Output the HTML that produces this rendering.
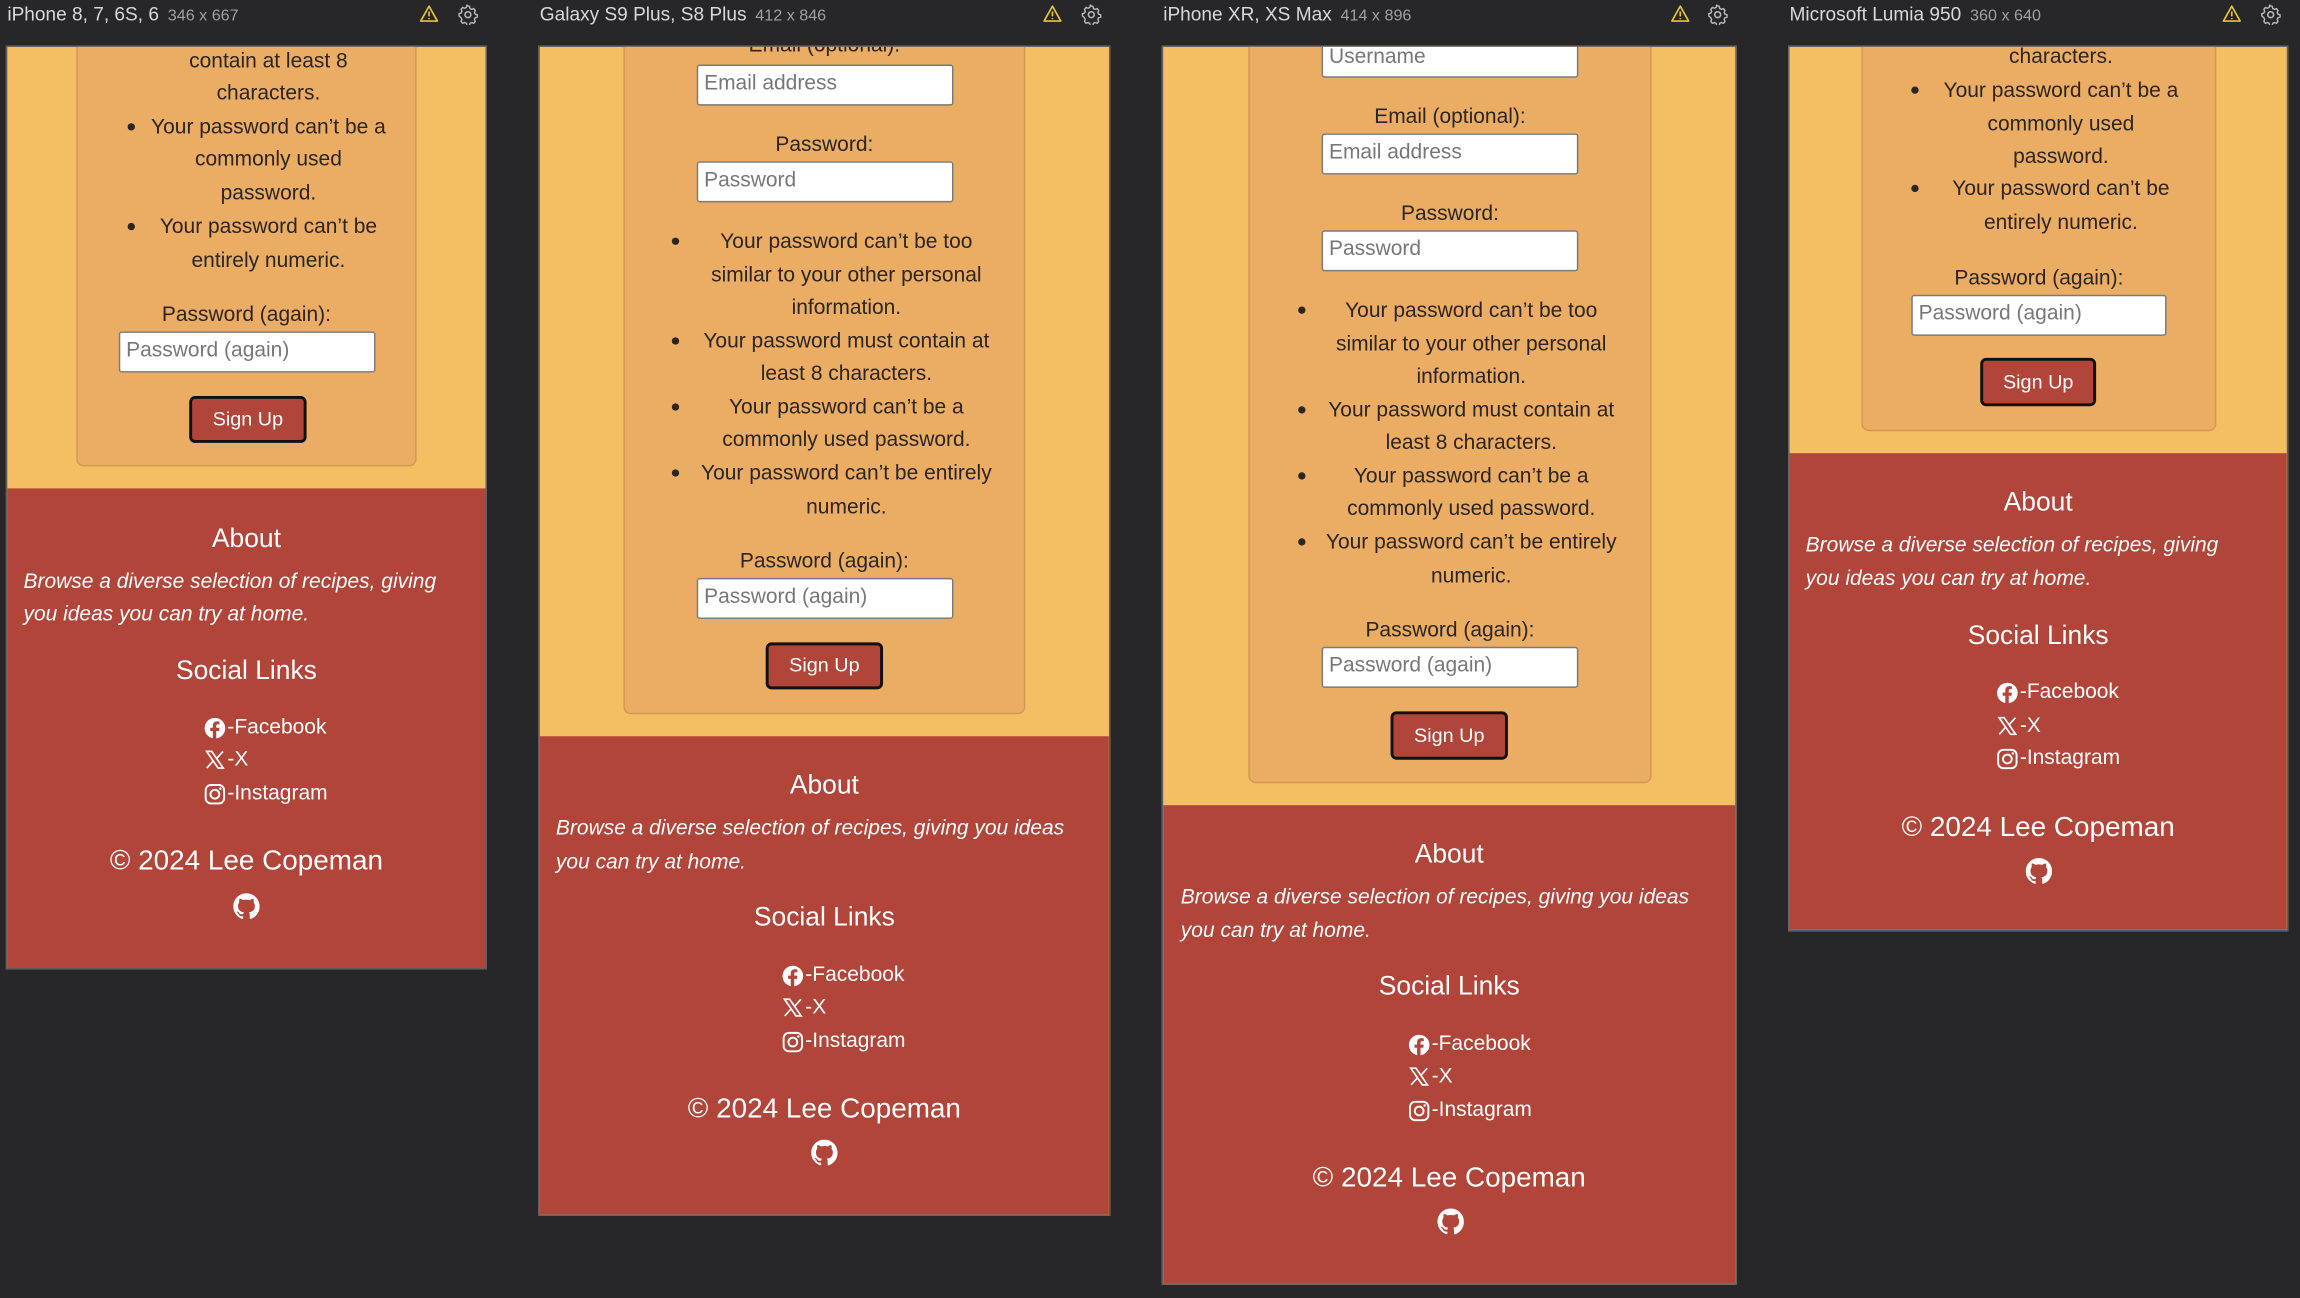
<!DOCTYPE html>
<html><head><meta charset="utf-8"><style>
html,body{margin:0;padding:0;background:#27272a;overflow:hidden;width:2300px;height:1298px}
#w{position:absolute;left:0;top:0;width:1568px;height:885px;transform:scale(1.46684,1.46667);transform-origin:0 0;font-family:"Liberation Sans",sans-serif}
.a{position:absolute}
.hd{position:absolute;top:2px;font-size:13px;color:#d8d8d8;white-space:nowrap}
.hd span{font-size:11px;color:#a0a0a0;margin-left:6px}
.pn{position:absolute;background:#F3BF62;border:1px solid #5e5e5e;overflow:hidden;box-sizing:border-box}
.card{position:absolute;background:#EBAC64;border:1px solid #D39857;border-radius:5px;box-sizing:border-box}
.ft{position:absolute;left:0;right:0;bottom:0;background:#B1453A}
.t{position:absolute;text-align:center;height:20px;line-height:20px;font-size:14.3px;color:#2b2622;white-space:nowrap}
.b{position:absolute;width:5px;height:5px;border-radius:50%;background:#2b2622}
.in{position:absolute;background:#fff;border:1px solid #7a7a7a;border-radius:2px;box-sizing:border-box;font-size:14.3px;color:#777;padding-left:4px;line-height:25px;white-space:nowrap;overflow:hidden}
.bt{position:absolute;background:#B1453A;border:2px solid #111;border-radius:4px;box-sizing:border-box;color:#fff;font-size:13.5px;text-align:center}
.w{position:absolute;color:#fff;white-space:nowrap;line-height:22px;height:22px}
.h{font-size:18px;text-align:center}
.it{font-style:italic;font-size:14.3px}
.sl{font-size:14.3px;display:flex;align-items:center}
.sl svg{margin-right:1px}
.cp{font-size:19px;text-align:center}
</style></head><body><div id="w">

<!-- headers -->
<div class="hd" style="left:5px">iPhone 8, 7, 6S, 6<span>346 x 667</span></div>
<div class="hd" style="left:368px">Galaxy S9 Plus, S8 Plus<span>412 x 846</span></div>
<div class="hd" style="left:793px">iPhone XR, XS Max<span>414 x 896</span></div>
<div class="hd" style="left:1220px">Microsoft Lumia 950<span>360 x 640</span></div>

<!-- header icons -->
<svg class="a" style="left:286px;top:3px" width="13" height="13" viewBox="0 0 16 16"><path d="M8 1.5L15 14H1Z" fill="none" stroke="#e8c23a" stroke-width="1.4" stroke-linejoin="round"/><path d="M8 6v4M8 11.5v1" stroke="#e8c23a" stroke-width="1.4"/></svg>
<svg class="a" style="left:312px;top:3px" width="14" height="14" viewBox="0 0 16 16"><circle cx="8" cy="8" r="2.3" fill="none" stroke="#bbb" stroke-width="1.2"/><path d="M8 1.2l1.2.3.4 1.7 1.3.7 1.6-.6 1.2 1.4-.6 1.6.6 1.3 1.6.5v1.8l-1.6.5-.6 1.3.6 1.6-1.2 1.4-1.6-.6-1.3.7-.4 1.7H7.2l-.4-1.7-1.3-.7-1.6.6-1.2-1.4.6-1.6-.6-1.3L1.1 9V7.2l1.6-.5.6-1.3-.6-1.6L3.9 2.4l1.6.6 1.3-.7.4-1.7Z" fill="none" stroke="#bbb" stroke-width="1.1"/></svg>
<svg class="a" style="left:711px;top:3px" width="13" height="13" viewBox="0 0 16 16"><path d="M8 1.5L15 14H1Z" fill="none" stroke="#e8c23a" stroke-width="1.4" stroke-linejoin="round"/><path d="M8 6v4M8 11.5v1" stroke="#e8c23a" stroke-width="1.4"/></svg>
<svg class="a" style="left:737px;top:3px" width="14" height="14" viewBox="0 0 16 16"><circle cx="8" cy="8" r="2.3" fill="none" stroke="#bbb" stroke-width="1.2"/><path d="M8 1.2l1.2.3.4 1.7 1.3.7 1.6-.6 1.2 1.4-.6 1.6.6 1.3 1.6.5v1.8l-1.6.5-.6 1.3.6 1.6-1.2 1.4-1.6-.6-1.3.7-.4 1.7H7.2l-.4-1.7-1.3-.7-1.6.6-1.2-1.4.6-1.6-.6-1.3L1.1 9V7.2l1.6-.5.6-1.3-.6-1.6L3.9 2.4l1.6.6 1.3-.7.4-1.7Z" fill="none" stroke="#bbb" stroke-width="1.1"/></svg>
<svg class="a" style="left:1139px;top:3px" width="13" height="13" viewBox="0 0 16 16"><path d="M8 1.5L15 14H1Z" fill="none" stroke="#e8c23a" stroke-width="1.4" stroke-linejoin="round"/><path d="M8 6v4M8 11.5v1" stroke="#e8c23a" stroke-width="1.4"/></svg>
<svg class="a" style="left:1164px;top:3px" width="14" height="14" viewBox="0 0 16 16"><circle cx="8" cy="8" r="2.3" fill="none" stroke="#bbb" stroke-width="1.2"/><path d="M8 1.2l1.2.3.4 1.7 1.3.7 1.6-.6 1.2 1.4-.6 1.6.6 1.3 1.6.5v1.8l-1.6.5-.6 1.3.6 1.6-1.2 1.4-1.6-.6-1.3.7-.4 1.7H7.2l-.4-1.7-1.3-.7-1.6.6-1.2-1.4.6-1.6-.6-1.3L1.1 9V7.2l1.6-.5.6-1.3-.6-1.6L3.9 2.4l1.6.6 1.3-.7.4-1.7Z" fill="none" stroke="#bbb" stroke-width="1.1"/></svg>
<svg class="a" style="left:1515px;top:3px" width="13" height="13" viewBox="0 0 16 16"><path d="M8 1.5L15 14H1Z" fill="none" stroke="#e8c23a" stroke-width="1.4" stroke-linejoin="round"/><path d="M8 6v4M8 11.5v1" stroke="#e8c23a" stroke-width="1.4"/></svg>
<svg class="a" style="left:1541px;top:3px" width="14" height="14" viewBox="0 0 16 16"><circle cx="8" cy="8" r="2.3" fill="none" stroke="#bbb" stroke-width="1.2"/><path d="M8 1.2l1.2.3.4 1.7 1.3.7 1.6-.6 1.2 1.4-.6 1.6.6 1.3 1.6.5v1.8l-1.6.5-.6 1.3.6 1.6-1.2 1.4-1.6-.6-1.3.7-.4 1.7H7.2l-.4-1.7-1.3-.7-1.6.6-1.2-1.4.6-1.6-.6-1.3L1.1 9V7.2l1.6-.5.6-1.3-.6-1.6L3.9 2.4l1.6.6 1.3-.7.4-1.7Z" fill="none" stroke="#bbb" stroke-width="1.1"/></svg>

<!-- ============ PANEL 1 ============ -->
<div class="pn" style="left:4px;top:31px;width:328px;height:630px">
 <div class="card" style="left:47px;top:-10px;width:232px;height:296px"></div>
 <div class="t" style="left:96px;width:164px;top:0px">contain at least 8</div>
 <div class="t" style="left:96px;width:164px;top:22px">characters.</div>
 <div class="b" style="left:82px;top:52px"></div>
 <div class="t" style="left:96px;width:164px;top:45px">Your password can’t be a</div>
 <div class="t" style="left:96px;width:164px;top:67px">commonly used</div>
 <div class="t" style="left:96px;width:164px;top:90px">password.</div>
 <div class="b" style="left:82px;top:120px"></div>
 <div class="t" style="left:96px;width:164px;top:113px">Your password can’t be</div>
 <div class="t" style="left:96px;width:164px;top:136px">entirely numeric.</div>
 <div class="t" style="left:47px;width:232px;top:173px">Password (again):</div>
 <div class="in" style="left:76px;top:194px;width:175px;height:28px">Password (again)</div>
 <div class="bt" style="left:124px;top:238px;width:80px;height:32px;line-height:28px">Sign Up</div>
 <div class="ft" style="top:301px">
  <div class="w h" style="left:0;right:0;top:23px">About</div>
  <div class="w it" style="left:11px;top:53px">Browse a diverse selection of recipes, giving</div>
  <div class="w it" style="left:11px;top:75px">you ideas you can try at home.</div>
  <div class="w h" style="left:0;right:0;top:113px">Social Links</div>
  <div class="w sl" style="left:134px;top:152px"><svg width="15" height="15" viewBox="0 0 16 16"><circle cx="8" cy="8" r="7.5" fill="#fff"/><path d="M9 16V10h2l.3-2.3H9V6.3c0-.7.2-1.1 1.1-1.1h1.2V3.1c-.3 0-1-.1-1.8-.1-1.8 0-3 1.1-3 3v1.7H4.6V10h1.9v6Z" fill="#B1453A"/></svg>-Facebook</div>
  <div class="w sl" style="left:134px;top:174px"><svg width="15" height="14" viewBox="0 0 16 16"><path d="M1.5 1.5h4l9 13h-4Z M14.3 1.5L9.2 7.2 M1.7 14.5L6.8 8.8" fill="none" stroke="#fff" stroke-width="1.3"/></svg>-X</div>
  <div class="w sl" style="left:134px;top:197px"><svg width="15" height="15" viewBox="0 0 16 16"><rect x="1.3" y="1.3" width="13.4" height="13.4" rx="3.8" fill="none" stroke="#fff" stroke-width="1.4"/><circle cx="8" cy="8" r="3.2" fill="none" stroke="#fff" stroke-width="1.4"/><circle cx="12" cy="4" r=".9" fill="#fff"/></svg>-Instagram</div>
  <div class="w cp" style="left:0;right:0;top:244px">© 2024 Lee Copeman</div>
  <svg class="a" style="left:154px;top:276px" width="18" height="18" viewBox="0 0 16 16"><path fill="#fff" d="M8 0C3.58 0 0 3.58 0 8c0 3.54 2.29 6.53 5.47 7.59.4.07.55-.17.55-.38v-1.33c-2.23.48-2.7-1.07-2.7-1.07-.36-.92-.89-1.17-.89-1.17-.73-.5.06-.49.06-.49.8.06 1.23.83 1.23.83.71 1.22 1.87.87 2.33.66.07-.52.28-.87.51-1.07-1.78-.2-3.65-.89-3.65-3.95 0-.87.31-1.59.82-2.15-.08-.2-.36-1.02.08-2.12 0 0 .67-.21 2.2.82.64-.18 1.32-.27 2-.27.68 0 1.36.09 2 .27 1.53-1.04 2.2-.82 2.2-.82.44 1.1.16 1.92.08 2.12.51.56.82 1.27.82 2.15 0 3.07-1.87 3.75-3.65 3.95.29.25.54.73.54 1.48v2.2c0 .21.15.46.55.38A8.01 8.01 0 0016 8c0-4.42-3.58-8-8-8z"/></svg>
 </div>
</div>

<!-- ============ PANEL 2 ============ -->
<div class="pn" style="left:367px;top:31px;width:390px;height:798px">
 <div class="card" style="left:57px;top:-10px;width:274px;height:465px"></div>
 <div class="t" style="left:57px;width:274px;top:-11px">Email (optional):</div>
 <div class="in" style="left:107px;top:12px;width:175px;height:28px">Email address</div>
 <div class="t" style="left:57px;width:274px;top:57px">Password:</div>
 <div class="in" style="left:107px;top:78px;width:175px;height:28px">Password</div>
 <div class="b" style="left:90px;top:130px"></div>
 <div class="t" style="left:100px;width:218px;top:123px">Your password can’t be too</div>
 <div class="t" style="left:100px;width:218px;top:146px">similar to your other personal</div>
 <div class="t" style="left:100px;width:218px;top:168px">information.</div>
 <div class="b" style="left:90px;top:198px"></div>
 <div class="t" style="left:100px;width:218px;top:191px">Your password must contain at</div>
 <div class="t" style="left:100px;width:218px;top:213px">least 8 characters.</div>
 <div class="b" style="left:90px;top:243px"></div>
 <div class="t" style="left:100px;width:218px;top:236px">Your password can’t be a</div>
 <div class="t" style="left:100px;width:218px;top:258px">commonly used password.</div>
 <div class="b" style="left:90px;top:288px"></div>
 <div class="t" style="left:100px;width:218px;top:281px">Your password can’t be entirely</div>
 <div class="t" style="left:100px;width:218px;top:304px">numeric.</div>
 <div class="t" style="left:57px;width:274px;top:341px">Password (again):</div>
 <div class="in" style="left:107px;top:362px;width:175px;height:28px">Password (again)</div>
 <div class="bt" style="left:154px;top:406px;width:80px;height:32px;line-height:28px">Sign Up</div>
 <div class="ft" style="top:470px">
  <div class="w h" style="left:0;right:0;top:22px">About</div>
  <div class="w it" style="left:11px;top:52px">Browse a diverse selection of recipes, giving you ideas</div>
  <div class="w it" style="left:11px;top:75px">you can try at home.</div>
  <div class="w h" style="left:0;right:0;top:112px">Social Links</div>
  <div class="w sl" style="left:165px;top:152px"><svg width="15" height="15" viewBox="0 0 16 16"><circle cx="8" cy="8" r="7.5" fill="#fff"/><path d="M9 16V10h2l.3-2.3H9V6.3c0-.7.2-1.1 1.1-1.1h1.2V3.1c-.3 0-1-.1-1.8-.1-1.8 0-3 1.1-3 3v1.7H4.6V10h1.9v6Z" fill="#B1453A"/></svg>-Facebook</div>
  <div class="w sl" style="left:165px;top:174px"><svg width="15" height="14" viewBox="0 0 16 16"><path d="M1.5 1.5h4l9 13h-4Z M14.3 1.5L9.2 7.2 M1.7 14.5L6.8 8.8" fill="none" stroke="#fff" stroke-width="1.3"/></svg>-X</div>
  <div class="w sl" style="left:165px;top:197px"><svg width="15" height="15" viewBox="0 0 16 16"><rect x="1.3" y="1.3" width="13.4" height="13.4" rx="3.8" fill="none" stroke="#fff" stroke-width="1.4"/><circle cx="8" cy="8" r="3.2" fill="none" stroke="#fff" stroke-width="1.4"/><circle cx="12" cy="4" r=".9" fill="#fff"/></svg>-Instagram</div>
  <div class="w cp" style="left:0;right:0;top:244px">© 2024 Lee Copeman</div>
  <svg class="a" style="left:185px;top:275px" width="18" height="18" viewBox="0 0 16 16"><path fill="#fff" d="M8 0C3.58 0 0 3.58 0 8c0 3.54 2.29 6.53 5.47 7.59.4.07.55-.17.55-.38v-1.33c-2.230.48-2.7-1.070-2.7-1.07-.36-.92-.89-1.17-.89-1.17-.73-.5.06-.49.06-.49.8.06 1.23.83 1.23.83.71 1.22 1.87.87 2.33.66.07-.52.28-.87.51-1.07-1.780-.2-3.650-.89-3.65-3.95 0-.87.31-1.59.82-2.15-.08-.2-.36-1.02.08-2.12 0 0 .67-.21 2.2.82.64-.18 1.32-.27 2-.27.68 0 1.36.09 2 .27 1.53-1.04 2.2-.82 2.2-.82.44 1.1.16 1.92.08 2.12.51.56.82 1.27.82 2.15 0 3.07-1.87 3.75-3.65 3.95.29.25.54.73.54 1.48v2.2c0 .21.15.46.55.38A8.01 8.01 0 0016 8c0-4.42-3.58-8-8-8z"/></svg>
 </div>
</div>

<!-- ============ PANEL 3 ============ -->
<div class="pn" style="left:792px;top:31px;width:392px;height:845px">
 <div class="card" style="left:58px;top:-10px;width:275px;height:512px"></div>
 <div class="in" style="left:108px;top:-4px;width:175px;height:25px;line-height:20px">Username</div>
 <div class="t" style="left:58px;width:275px;top:38px">Email (optional):</div>
 <div class="in" style="left:108px;top:59px;width:175px;height:28px">Email address</div>
 <div class="t" style="left:58px;width:275px;top:104px">Password:</div>
 <div class="in" style="left:108px;top:125px;width:175px;height:28px">Password</div>
 <div class="b" style="left:92px;top:177px"></div>
 <div class="t" style="left:101px;width:218px;top:170px">Your password can’t be too</div>
 <div class="t" style="left:101px;width:218px;top:193px">similar to your other personal</div>
 <div class="t" style="left:101px;width:218px;top:215px">information.</div>
 <div class="b" style="left:92px;top:245px"></div>
 <div class="t" style="left:101px;width:218px;top:238px">Your password must contain at</div>
 <div class="t" style="left:101px;width:218px;top:260px">least 8 characters.</div>
 <div class="b" style="left:92px;top:290px"></div>
 <div class="t" style="left:101px;width:218px;top:283px">Your password can’t be a</div>
 <div class="t" style="left:101px;width:218px;top:305px">commonly used password.</div>
 <div class="b" style="left:92px;top:335px"></div>
 <div class="t" style="left:101px;width:218px;top:328px">Your password can’t be entirely</div>
 <div class="t" style="left:101px;width:218px;top:351px">numeric.</div>
 <div class="t" style="left:58px;width:275px;top:388px">Password (again):</div>
 <div class="in" style="left:108px;top:409px;width:175px;height:28px">Password (again)</div>
 <div class="bt" style="left:155px;top:453px;width:80px;height:33px;line-height:29px">Sign Up</div>
 <div class="ft" style="top:517px">
  <div class="w h" style="left:0;right:0;top:22px">About</div>
  <div class="w it" style="left:12px;top:52px">Browse a diverse selection of recipes, giving you ideas</div>
  <div class="w it" style="left:12px;top:75px">you can try at home.</div>
  <div class="w h" style="left:0;right:0;top:112px">Social Links</div>
  <div class="w sl" style="left:167px;top:152px"><svg width="15" height="15" viewBox="0 0 16 16"><circle cx="8" cy="8" r="7.5" fill="#fff"/><path d="M9 16V10h2l.3-2.3H9V6.3c0-.7.2-1.1 1.1-1.1h1.2V3.1c-.3 0-1-.1-1.8-.1-1.8 0-3 1.1-3 3v1.7H4.6V10h1.9v6Z" fill="#B1453A"/></svg>-Facebook</div>
  <div class="w sl" style="left:167px;top:174px"><svg width="15" height="14" viewBox="0 0 16 16"><path d="M1.5 1.5h4l9 13h-4Z M14.3 1.5L9.2 7.2 M1.7 14.5L6.8 8.8" fill="none" stroke="#fff" stroke-width="1.3"/></svg>-X</div>
  <div class="w sl" style="left:167px;top:197px"><svg width="15" height="15" viewBox="0 0 16 16"><rect x="1.3" y="1.3" width="13.4" height="13.4" rx="3.8" fill="none" stroke="#fff" stroke-width="1.4"/><circle cx="8" cy="8" r="3.2" fill="none" stroke="#fff" stroke-width="1.4"/><circle cx="12" cy="4" r=".9" fill="#fff"/></svg>-Instagram</div>
  <div class="w cp" style="left:0;right:0;top:244px">© 2024 Lee Copeman</div>
  <svg class="a" style="left:187px;top:275px" width="18" height="18" viewBox="0 0 16 16"><path fill="#fff" d="M8 0C3.58 0 0 3.58 0 8c0 3.54 2.29 6.53 5.47 7.59.4.07.55-.17.55-.38v-1.33c-2.23.48-2.7-1.07-2.7-1.07-.36-.92-.89-1.17-.89-1.17-.73-.5.06-.49.06-.49.8.06 1.23.83 1.23.83.71 1.22 1.870.87 2.33.66.07-.52.28-.87.51-1.07-1.78-.2-3.65-.89-3.65-3.95 0-.87.31-1.59.82-2.15-.08-.2-.36-1.02.08-2.12 0 0 .67-.21 2.2.82.64-.18 1.32-.27 2-.27.68 0 1.36.09 2 .27 1.53-1.04 2.2-.82 2.2-.82.44 1.1.16 1.92.08 2.12.51.56.82 1.27.82 2.15 0 3.07-1.87 3.75-3.65 3.95.29.25.54.73.54 1.48v2.2c0 .21.15.46.55.38A8.01 8.01 0 0016 8c0-4.42-3.58-8-8-8z"/></svg>
 </div>
</div>

<!-- ============ PANEL 4 ============ -->
<div class="pn" style="left:1219px;top:31px;width:341px;height:604px">
 <div class="card" style="left:49px;top:-10px;width:242px;height:272px"></div>
 <div class="t" style="left:100px;width:170px;top:-3px">characters.</div>
 <div class="b" style="left:83px;top:27px"></div>
 <div class="t" style="left:100px;width:170px;top:20px">Your password can’t be a</div>
 <div class="t" style="left:100px;width:170px;top:43px">commonly used</div>
 <div class="t" style="left:100px;width:170px;top:65px">password.</div>
 <div class="b" style="left:83px;top:94px"></div>
 <div class="t" style="left:100px;width:170px;top:87px">Your password can’t be</div>
 <div class="t" style="left:100px;width:170px;top:110px">entirely numeric.</div>
 <div class="t" style="left:49px;width:242px;top:148px">Password (again):</div>
 <div class="in" style="left:83px;top:169px;width:174px;height:28px">Password (again)</div>
 <div class="bt" style="left:130px;top:212px;width:79px;height:33px;line-height:29px">Sign Up</div>
 <div class="ft" style="top:277px">
  <div class="w h" style="left:0;right:0;top:22px">About</div>
  <div class="w it" style="left:11px;top:52px">Browse a diverse selection of recipes, giving</div>
  <div class="w it" style="left:11px;top:75px">you ideas you can try at home.</div>
  <div class="w h" style="left:0;right:0;top:113px">Social Links</div>
  <div class="w sl" style="left:141px;top:152px"><svg width="15" height="15" viewBox="0 0 16 16"><circle cx="8" cy="8" r="7.5" fill="#fff"/><path d="M9 16V10h2l.3-2.3H9V6.3c0-.7.2-1.1 1.1-1.1h1.2V3.1c-.3 0-1-.1-1.8-.1-1.8 0-3 1.1-3 3v1.7H4.6V10h1.9v6Z" fill="#B1453A"/></svg>-Facebook</div>
  <div class="w sl" style="left:141px;top:175px"><svg width="15" height="14" viewBox="0 0 16 16"><path d="M1.5 1.5h4l9 13h-4Z M14.3 1.5L9.2 7.2 M1.7 14.5L6.8 8.8" fill="none" stroke="#fff" stroke-width="1.3"/></svg>-X</div>
  <div class="w sl" style="left:141px;top:197px"><svg width="15" height="15" viewBox="0 0 16 16"><rect x="1.3" y="1.3" width="13.4" height="13.4" rx="3.8" fill="none" stroke="#fff" stroke-width="1.4"/><circle cx="8" cy="8" r="3.2" fill="none" stroke="#fff" stroke-width="1.4"/><circle cx="12" cy="4" r=".9" fill="#fff"/></svg>-Instagram</div>
  <div class="w cp" style="left:0;right:0;top:245px">© 2024 Lee Copeman</div>
  <svg class="a" style="left:161px;top:276px" width="18" height="18" viewBox="0 0 16 16"><path fill="#fff" d="M8 0C3.58 0 0 3.58 0 8c0 3.54 2.29 6.53 5.47 7.59.4.07.55-.17.55-.38v-1.33c-2.23.48-2.7-1.07-2.7-1.07-.36-.92-.89-1.17-.89-1.17-.73-.5.06-.49.06-.49.8.06 1.23.83 1.23.83.71 1.22 1.87.87 2.33.66.07-.52.28-.87.51-1.07-1.78-.2-3.65-.89-3.65-3.95 0-.87.31-1.59.82-2.15-.08-.2-.36-1.02.08-2.12 0 0 .67-.21 2.2.82.64-.18 1.32-.27 2-.27.68 0 1.36.09 2 .27 1.53-1.04 2.2-.82 2.2-.82.44 1.1.16 1.92.08 2.12.51.56.82 1.27.82 2.15 0 3.07-1.87 3.75-3.65 3.95.29.25.54.73.54 1.48v2.2c0 .21.15.46.55.38A8.01 8.01 0 0016 8c0-4.42-3.58-8-8-8z"/></svg>
 </div>
</div>

</div></body></html>
